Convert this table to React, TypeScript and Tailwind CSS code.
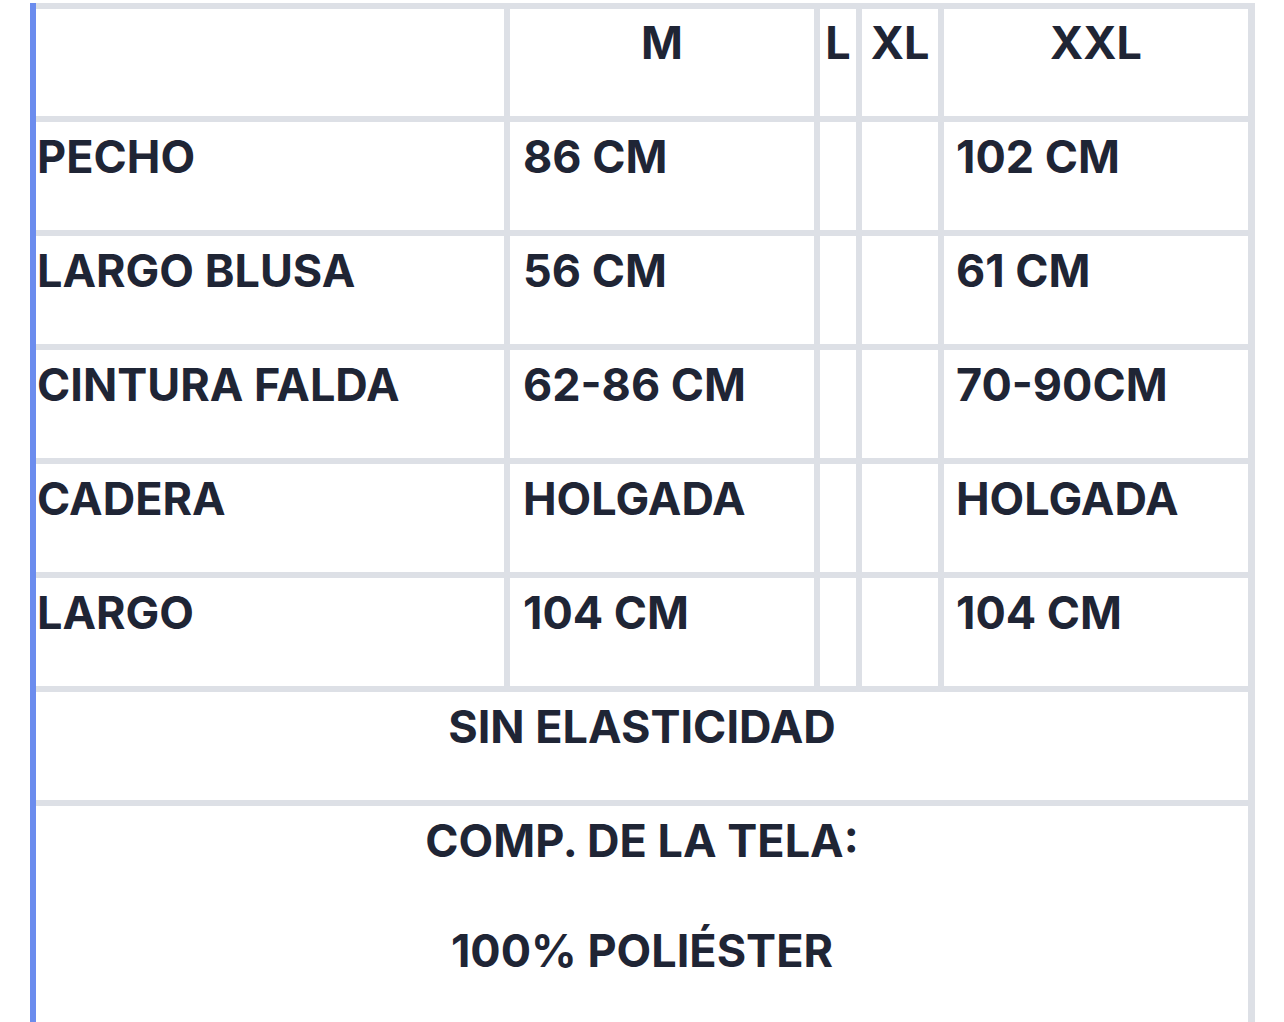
const rows = [
  ['PECHO', '86 CM', '102 CM'],
  ['LARGO BLUSA', '56 CM', '61 CM'],
  ['CINTURA FALDA', '62-86 CM', '70-90CM'],
  ['CADERA', 'HOLGADA', 'HOLGADA'],
  ['LARGO', '104 CM', '104 CM'],
];

const cell = 'bg-white h-[108px] pt-[6px] leading-[1.3]';

export default function App() {
  return (
    <div className="h-[1022px] w-[1284px] overflow-hidden bg-white font-['Inter','Liberation_Sans',sans-serif] text-[45px] font-bold text-[#1f2535]">
      <div className="ml-[30px] mt-[3px] w-[1225px] border-l-[6px] border-[#6b8cee]">
        <div className="grid grid-cols-[468px_304px_36px_76px_304px] gap-[6px] bg-[#dde0e6] pt-[6px] pr-[6px]">
          <div className="bg-white h-[107px]" />
          <div className="bg-white h-[107px] pt-[5px] text-center leading-[1.3]">M</div>
          <div className="bg-white h-[107px] pt-[5px] text-center leading-[1.3]">L</div>
          <div className="bg-white h-[107px] pt-[5px] text-center leading-[1.3]">XL</div>
          <div className="bg-white h-[107px] pt-[5px] text-center leading-[1.3]">XXL</div>
          {rows.map(([label, m, xxl]) => (
            <div key={label} className="contents">
              <div className={`${cell} pl-[1px]`}>{label}</div>
              <div className={`${cell} pl-[13px]`}>{m}</div>
              <div className={cell} />
              <div className={cell} />
              <div className={`${cell} pl-[12px]`}>{xxl}</div>
            </div>
          ))}
          <div className={`${cell} col-span-5 text-center`}>SIN ELASTICIDAD</div>
          <div className="col-span-5 h-[260px] bg-white pt-[6px] text-center leading-[1.3]">
            <p>COMP. DE LA TELA:</p>
            <p className="mt-[51px]">100% POLIÉSTER</p>
          </div>
        </div>
      </div>
    </div>
  );
}
